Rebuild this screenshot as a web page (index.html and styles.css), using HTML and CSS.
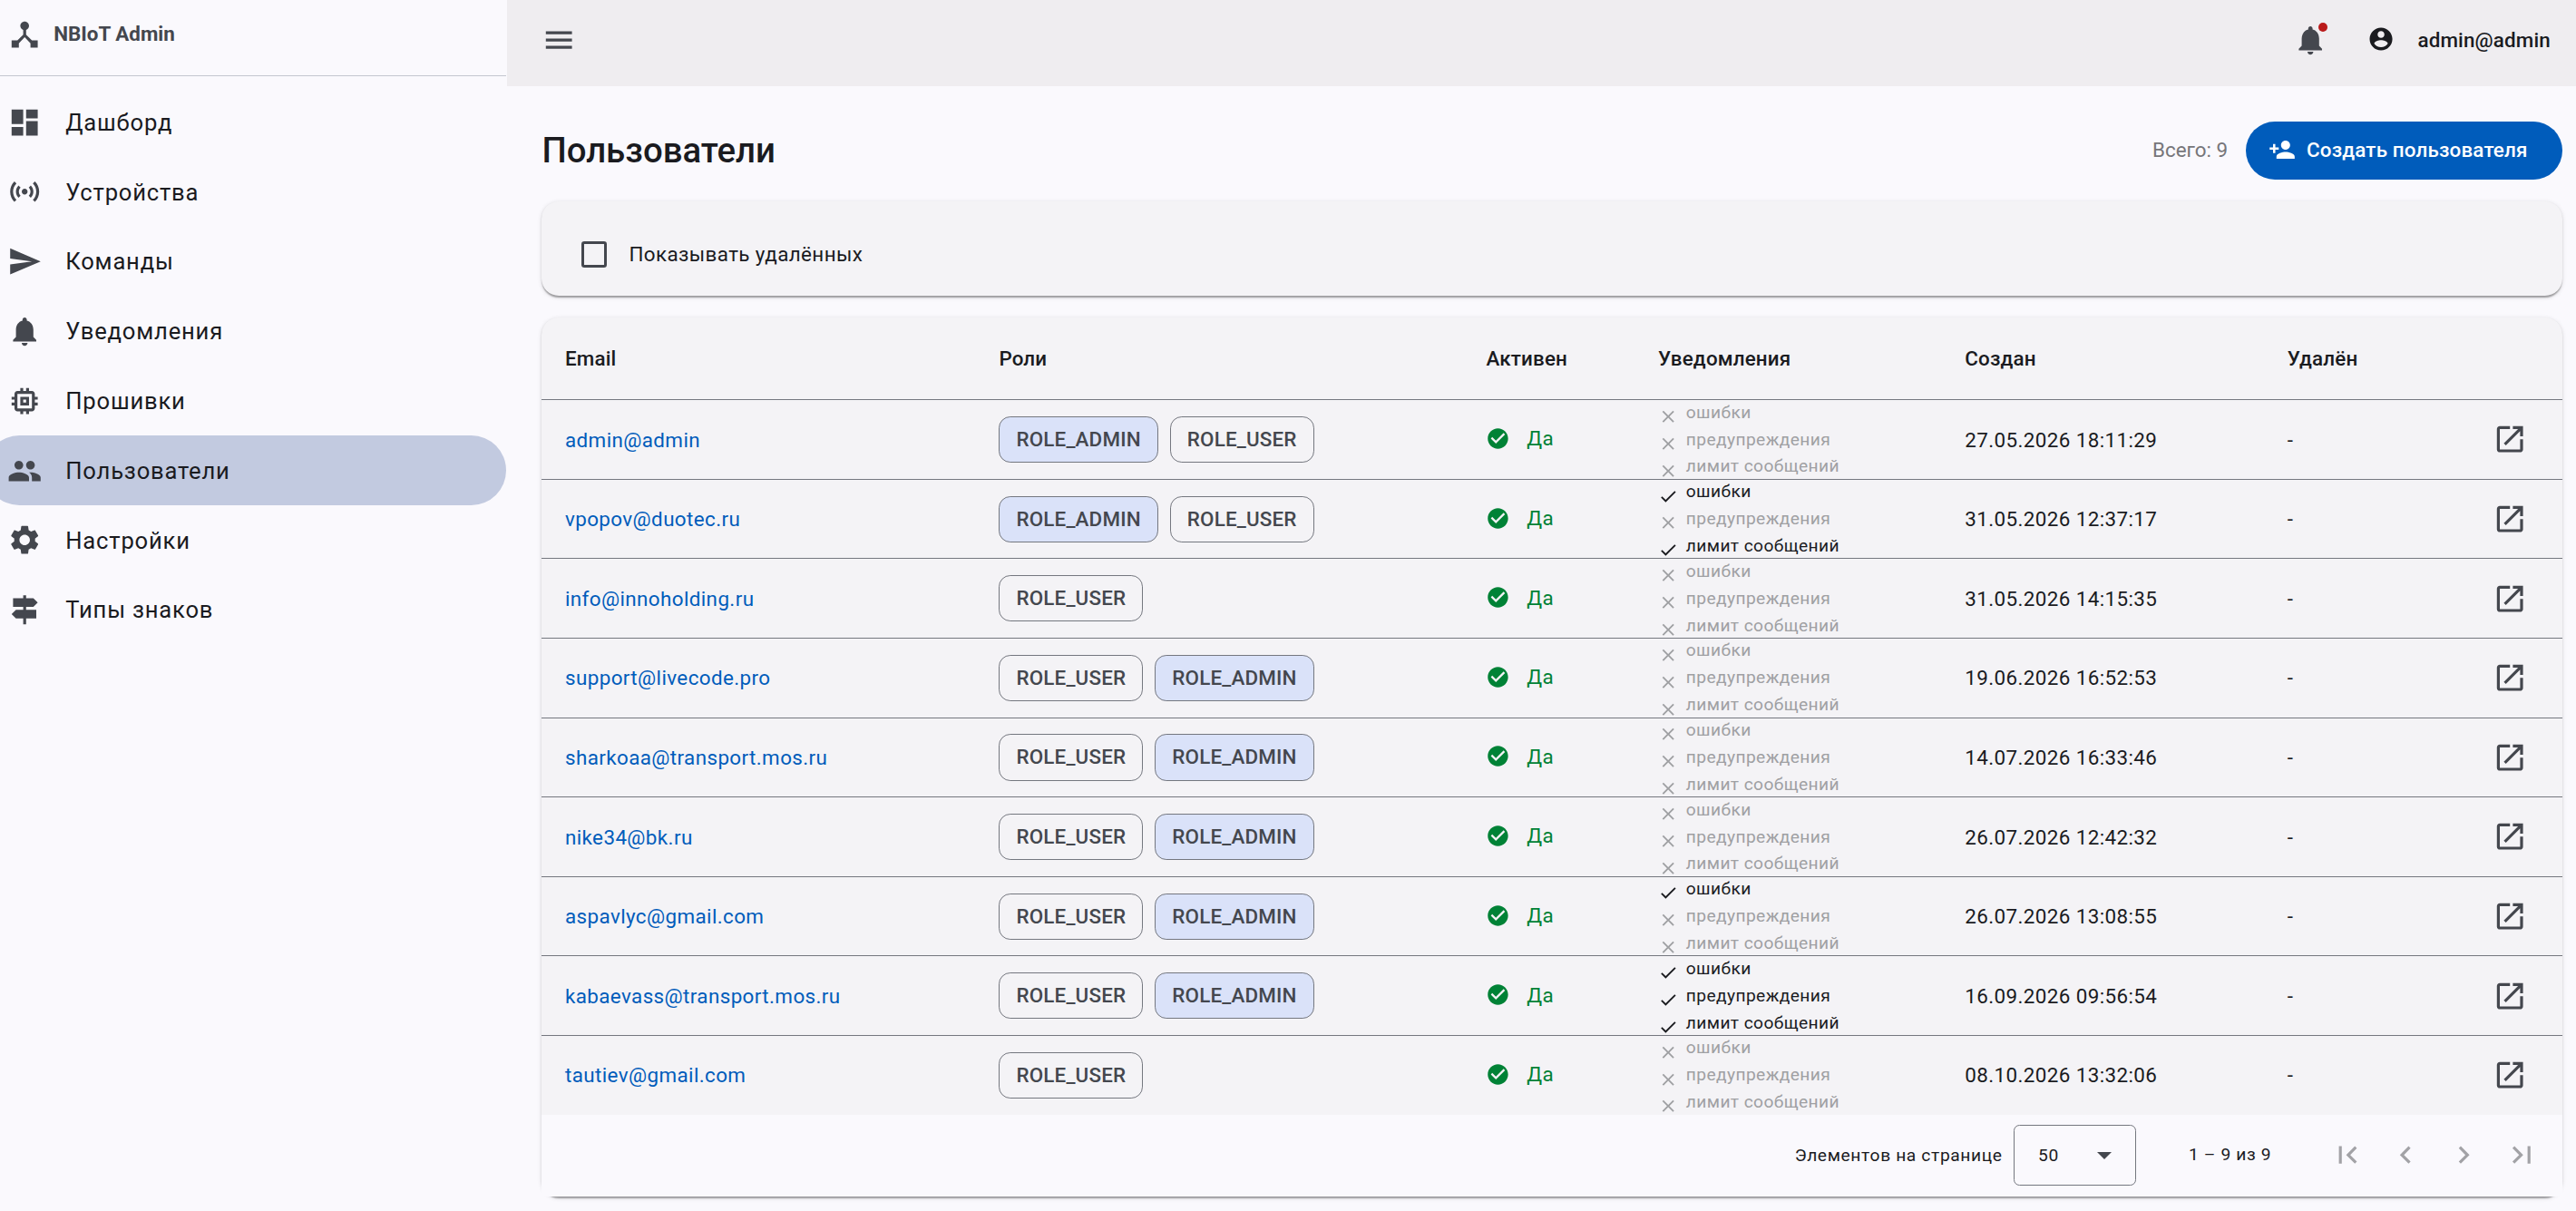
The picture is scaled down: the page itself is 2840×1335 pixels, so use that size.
FILE: index.html
```html
<!DOCTYPE html>
<html lang="ru">
<head>
<meta charset="utf-8">
<title>NBIoT Admin</title>
<link rel="stylesheet" href="styles.css">
</head>
<body>
<svg class="sprite" xmlns="http://www.w3.org/2000/svg">
  <symbol id="hub" viewBox="0 0 24 24"><path d="M17 16l-4-4V8.82C14.16 8.4 15 7.3 15 6c0-1.66-1.34-3-3-3S9 4.34 9 6c0 1.3.84 2.4 2 2.82V12l-4 4H3v5h5v-3.05l4-4.2 4 4.2V21h5v-5h-4z"/></symbol>
  <symbol id="dashboard" viewBox="0 0 24 24"><path d="M3 13h8V3H3v10zm0 8h8v-6H3v6zm10 0h8V11h-8v10zm0-18v6h8V3h-8z"/></symbol>
  <symbol id="sensors" viewBox="0 0 24 24"><path d="M7.76 16.24C6.67 15.16 6 13.66 6 12s.67-3.16 1.76-4.24l1.42 1.42C8.45 9.9 8 10.9 8 12c0 1.1.45 2.1 1.17 2.83l-1.41 1.41zm8.48 0C17.33 15.16 18 13.66 18 12s-.67-3.16-1.76-4.24l-1.42 1.42C15.55 9.9 16 10.9 16 12c0 1.1-.45 2.1-1.17 2.83l1.41 1.41zM12 10c-1.1 0-2 .9-2 2s.9 2 2 2 2-.9 2-2-.9-2-2-2zm8 2c0 2.21-.9 4.21-2.35 5.65l1.42 1.42C20.88 17.26 22 14.76 22 12s-1.12-5.26-2.93-7.07l-1.42 1.42C19.1 7.79 20 9.79 20 12zM6.35 6.35L4.93 4.93C3.12 6.74 2 9.24 2 12s1.12 5.26 2.93 7.07l1.42-1.42C4.9 16.21 4 14.21 4 12s.9-4.21 2.35-5.65z"/></symbol>
  <symbol id="send" viewBox="0 0 24 24"><path d="M2.01 21L23 12 2.01 3 2 10l15 2-15 2z"/></symbol>
  <symbol id="bell" viewBox="0 0 24 24"><path d="M12 22c1.1 0 2-.9 2-2h-4c0 1.1.89 2 2 2zm6-6v-5c0-3.07-1.64-5.64-4.5-6.32V4c0-.83-.67-1.5-1.5-1.5s-1.5.67-1.5 1.5v.68C7.63 5.36 6 7.92 6 11v5l-2 2v1h16v-1l-2-2z"/></symbol>
  <symbol id="memory" viewBox="0 0 24 24"><path d="M15 9H9v6h6V9zm-2 4h-2v-2h2v2zm8-2V9h-2V7c0-1.1-.9-2-2-2h-2V3h-2v2h-2V3H9v2H7c-1.1 0-2 .9-2 2v2H3v2h2v2H3v2h2v2c0 1.1.9 2 2 2h2v2h2v-2h2v2h2v-2h2c1.1 0 2-.9 2-2v-2h2v-2h-2v-2h2zm-4 6H7V7h10v10z"/></symbol>
  <symbol id="people" viewBox="0 0 24 24"><path d="M16 11c1.66 0 2.99-1.34 2.99-3S17.66 5 16 5c-1.66 0-3 1.34-3 3s1.34 3 3 3zm-8 0c1.66 0 2.99-1.34 2.99-3S9.66 5 8 5C6.34 5 5 6.34 5 8s1.34 3 3 3zm0 2c-2.33 0-7 1.17-7 3.5V19h14v-2.5c0-2.33-4.67-3.5-7-3.5zm8 0c-.29 0-.62.02-.97.05 1.16.84 1.97 1.97 1.97 3.45V19h6v-2.5c0-2.33-4.67-3.5-7-3.5z"/></symbol>
  <symbol id="settings" viewBox="0 0 24 24"><path d="M19.14 12.94c.04-.3.06-.61.06-.94 0-.32-.02-.64-.07-.94l2.03-1.58c.18-.14.23-.41.12-.61l-1.92-3.32c-.12-.22-.37-.29-.59-.22l-2.39.96c-.5-.38-1.03-.7-1.62-.94l-.36-2.54c-.04-.24-.24-.41-.48-.41h-3.84c-.24 0-.43.17-.47.41l-.36 2.54c-.59.24-1.13.57-1.62.94l-2.39-.96c-.22-.08-.47 0-.59.22L2.74 8.87c-.12.21-.08.47.12.61l2.03 1.58c-.05.3-.09.63-.09.94s.02.64.07.94l-2.03 1.58c-.18.14-.23.41-.12.61l1.92 3.32c.12.22.37.29.59.22l2.39-.96c.5.38 1.03.7 1.62.94l.36 2.54c.05.24.24.41.48.41h3.84c.24 0 .44-.17.47-.41l.36-2.54c.59-.24 1.13-.56 1.62-.94l2.39.96c.22.08.47 0 .59-.22l1.92-3.32c.12-.22.07-.47-.12-.61l-2.01-1.58zM12 15.6c-1.98 0-3.6-1.62-3.6-3.6s1.62-3.6 3.6-3.6 3.6 1.62 3.6 3.6-1.62 3.6-3.6 3.6z"/></symbol>
  <symbol id="signpost" viewBox="0 0 24 24"><path d="M13 10h5l3-3-3-3h-5V2h-2v2H4v6h7v2H6l-3 3 3 3h5v4h2v-4h7v-6h-7v-2z"/></symbol>
  <symbol id="menu" viewBox="0 0 24 24"><path d="M3 18h18v-2H3v2zm0-5h18v-2H3v2zm0-7v2h18V6H3z"/></symbol>
  <symbol id="account" viewBox="0 0 24 24"><path d="M12 2C6.48 2 2 6.48 2 12s4.48 10 10 10 10-4.48 10-10S17.52 2 12 2zm0 3c1.66 0 3 1.34 3 3s-1.34 3-3 3-3-1.34-3-3 1.34-3 3-3zm0 14.2c-2.5 0-4.71-1.28-6-3.22.03-1.99 4-3.08 6-3.08 1.99 0 5.97 1.09 6 3.08-1.29 1.94-3.5 3.22-6 3.22z"/></symbol>
  <symbol id="person-add" viewBox="0 0 24 24"><path d="M15 12c2.21 0 4-1.79 4-4s-1.79-4-4-4-4 1.79-4 4 1.79 4 4 4zm-9-2V7H4v3H1v2h3v3h2v-3h3v-2H6zm9 4c-2.67 0-8 1.34-8 4v2h16v-2c0-2.66-5.33-4-8-4z"/></symbol>
  <symbol id="check-circle" viewBox="0 0 24 24"><path d="M12 2C6.48 2 2 6.48 2 12s4.48 10 10 10 10-4.48 10-10S17.52 2 12 2zm-2 15l-5-5 1.41-1.41L10 14.17l7.59-7.59L19 8l-9 9z"/></symbol>
  <symbol id="check" viewBox="0 0 24 24"><path d="M9 16.17L4.83 12l-1.42 1.41L9 19 21 7l-1.41-1.41z"/></symbol>
  <symbol id="close" viewBox="0 0 24 24"><path d="M19 6.41L17.59 5 12 10.59 6.41 5 5 6.41 10.59 12 5 17.59 6.41 19 12 13.41 17.59 19 19 17.59 13.41 12z"/></symbol>
  <symbol id="open" viewBox="0 0 24 24"><path d="M19 19H5V5h7V3H5c-1.11 0-2 .9-2 2v14c0 1.1.89 2 2 2h14c1.1 0 2-.9 2-2v-7h-2v7zM14 3v2h3.59l-9.83 9.83 1.41 1.41L19 6.41V10h2V3h-7z"/></symbol>
  <symbol id="first" viewBox="0 0 24 24"><path d="M18.41 16.59L13.82 12l4.59-4.59L17 6l-6 6 6 6zM6 6h2v12H6z"/></symbol>
  <symbol id="prev" viewBox="0 0 24 24"><path d="M15.41 7.41L14 6l-6 6 6 6 1.41-1.41L10.83 12z"/></symbol>
  <symbol id="next" viewBox="0 0 24 24"><path d="M10 6L8.59 7.41 13.17 12l-4.58 4.59L10 18l6-6z"/></symbol>
  <symbol id="last" viewBox="0 0 24 24"><path d="M5.59 7.41L10.18 12l-4.59 4.59L7 18l6-6-6-6zM16 6h2v12h-2z"/></symbol>
</svg>
<div class="app">
  <aside class="sidebar">
    <div class="brand"><svg class="icon"><use href="#hub"/></svg><span>NBIoT Admin</span></div>
    <nav class="nav">
      <a class="nav-item"><svg class="icon"><use href="#dashboard"/></svg><span>Дашборд</span></a>
      <a class="nav-item"><svg class="icon"><use href="#sensors"/></svg><span>Устройства</span></a>
      <a class="nav-item"><svg class="icon"><use href="#send"/></svg><span>Команды</span></a>
      <a class="nav-item"><svg class="icon"><use href="#bell"/></svg><span>Уведомления</span></a>
      <a class="nav-item"><svg class="icon"><use href="#memory"/></svg><span>Прошивки</span></a>
      <a class="nav-item active"><svg class="icon"><use href="#people"/></svg><span>Пользователи</span></a>
      <a class="nav-item"><svg class="icon"><use href="#settings"/></svg><span>Настройки</span></a>
      <a class="nav-item"><svg class="icon"><use href="#signpost"/></svg><span>Типы знаков</span></a>
    </nav>
  </aside>
  <div class="page">
    <header class="toolbar">
      <svg class="icon"><use href="#menu"/></svg>
      <span class="spacer"></span>
      <span class="alerts"><svg class="icon"><use href="#bell"/></svg><i class="dot"></i></span>
      <span class="user"><svg class="icon icon-small"><use href="#account"/></svg><span>admin@admin</span></span>
    </header>
    <main class="content">
      <div class="heading">
        <h1>Пользователи</h1>
        <span class="spacer"></span>
        <span class="total">Всего: 9</span>
        <button class="create"><svg class="icon icon-small"><use href="#person-add"/></svg><span>Создать пользователя</span></button>
      </div>
      <section class="card filter">
        <label class="check-label"><span class="checkbox"></span><span>Показывать удалённых</span></label>
      </section>
      <section class="card">
        <table class="users">
          <colgroup><col class="c-email"><col class="c-roles"><col class="c-active"><col class="c-notes"><col class="c-created"><col></colgroup>
          <thead><tr><th>Email</th><th>Роли</th><th>Активен</th><th>Уведомления</th><th>Создан</th><th>Удалён</th></tr></thead>
          <tbody id="rows"></tbody>
        </table>
        <footer class="paginator">
          <span class="per-page">Элементов на странице</span>
          <span class="select"><span>50</span><i class="arrow"></i></span>
          <span class="range">1 – 9 из 9</span>
          <span class="pages">
            <svg class="icon"><use href="#first"/></svg><svg class="icon"><use href="#prev"/></svg><svg class="icon"><use href="#next"/></svg><svg class="icon"><use href="#last"/></svg>
          </span>
        </footer>
      </section>
    </main>
  </div>
</div>
<script src="app.js"></script>
</body>
</html>
```
FILE: styles.css
```css
* { box-sizing: border-box; }
html { background: #faf9fd; }
body {
  margin: 0;
  zoom: 1.6;
  font-family: Roboto, "Liberation Sans", sans-serif;
  font-size: 14px;
  line-height: 20px;
  letter-spacing: .25px;
  color: #1a1b1f;
  background: #faf9fd;
  overflow: hidden;
}
.sprite { display: none; }
.icon { width: 24px; height: 24px; fill: currentColor; flex: none; display: block; }
.icon-small { width: 18.8px; height: 18.8px; }
.spacer { flex: 1; }
.app { display: flex; height: 834.375px; overflow: hidden; }

.sidebar { width: 349.375px; padding-right: .625px; flex: none; overflow: hidden; }
.brand {
  display: flex; align-items: flex-start; gap: 7.8px;
  height: 52.5px; padding: 12px 0 0 5.2px;
  border-bottom: 1px solid #c4c6d0;
  color: #44474e; font-weight: 700; letter-spacing: 0;
}
.brand span { margin-top: 1.2px; }
.nav { padding-top: 7.5px; margin-left: -10.8px; }
.nav-item {
  display: flex; align-items: center; gap: 16px;
  height: 48px; padding: .5px 16px 0; border-radius: 24px;
  font-size: 16px; letter-spacing: .5px;
}
.nav-item .icon { color: #44474e; }
.nav-item.active { background: #c2cae0; }

.page { flex: 1; min-width: 0; }
.toolbar {
  display: flex; align-items: center;
  height: 59.4px; padding: 0 17.5px 4.6px 24px;
  background: #efedf0;
}
.toolbar > .icon, .alerts { color: #44474e; }
.alerts { position: relative; margin-right: 27.6px; }
.dot {
  position: absolute; right: 0; top: 0;
  width: 6.25px; height: 6.25px; border-radius: 50%; background: #ba1a1a;
}
.user { display: flex; align-items: center; gap: 15.8px; font-weight: 500; letter-spacing: .1px; }
.user .icon { margin-top: -1px; }

.content { padding: 24.4px 9.4px 0 24px; }
.heading { display: flex; align-items: center; height: 40px; margin-bottom: 15px; }
h1 { margin: -1px 0 0; font-size: 24px; line-height: 32px; font-weight: 500; letter-spacing: 0; }
.total { color: #76767a; margin: -1px 12.4px 0 0; letter-spacing: 0; }
.create {
  display: flex; align-items: center; gap: 7.6px;
  height: 40px; padding: 0 24px 1px 15.6px;
  border: 0; border-radius: 20px;
  background: #005cbb; color: #fff;
  font: inherit; font-weight: 500; letter-spacing: .1px;
}
.card {
  border-radius: 12px; background: #f4f3f6;
  box-shadow: 0 2px 1px -1px rgba(0,0,0,.2), 0 1px 1px rgba(0,0,0,.14), 0 1px 3px rgba(0,0,0,.12);
}
.filter { height: 65px; margin-bottom: 15.2px; padding: 20.3px 16px 16px; display: flex; align-items: center; }
.check-label { display: flex; align-items: center; gap: 15px; margin-top: 3px; padding-left: 11px; }
.checkbox { width: 18px; height: 18px; border: 2px solid #44474e; border-radius: 2px; margin-top: 1px; }

.users { width: 100%; table-layout: fixed; border-collapse: separate; border-spacing: 0; }
.users th, .users td { padding: 0 16px; text-align: left; vertical-align: middle; border-bottom: 1px solid #74777f; }
.users th { height: 56.8px; font-weight: 500; letter-spacing: .1px; }
.users td { height: 54.75px; }
.users tbody tr:last-child td { border-bottom: 0; height: 54.125px; }
.c-email { width: 299px; }
.c-roles { width: 335.7px; }
.c-active { width: 118.4px; }
.c-notes { width: 211.45px; }
.c-created { width: 222.2px; }
.email { color: #005cbb; }
.chips { display: flex; gap: 8px; }
.chip {
  height: 32px; line-height: 30px; padding: 0 11.35px;
  border: 1px solid #74777f; border-radius: 8px;
  color: #44474e; font-weight: 500; letter-spacing: .1px;
}
.chip.admin { background: #dae2f9; }
.status { display: flex; align-items: center; gap: 11.2px; color: #008236; margin-top: -1.4px; }
.status .icon { width: 16.8px; height: 16.8px; }
.notes { height: 54px; display: flex; flex-direction: column; justify-content: center; }
.note { display: flex; align-items: center; gap: 5.3px; height: 18.7px; flex: none; font-size: 12px; letter-spacing: .25px; }
.note .icon { width: 14px; height: 14px; margin-top: 5.6px; }
.note.off { color: #9fa0a3; }
.last-cell { display: flex; align-items: center; justify-content: space-between; }
.last-cell .icon { color: #44474e; margin-right: 8px; }

.paginator {
  display: flex; align-items: center; justify-content: flex-end;
  height: 56.2px; padding-right: 8px;
  background: #faf9fd; font-size: 12px; letter-spacing: .4px;
}
.select {
  display: flex; align-items: center; justify-content: space-between;
  width: 84px; height: 42.4px; margin: 0 36.4px 0 8px; padding: 0 16px;
  border: 1px solid #74777f; border-radius: 4px;
}
.arrow { border: 5px solid transparent; border-top-color: #44474e; border-bottom: 0; margin-top: 1px; }
.range { margin-top: -1px; }
.pages { display: flex; gap: 16px; margin-left: 40.3px; padding-right: 8.2px; color: #a2a2a6; }
```
FILE: app.js
```js
const A = "ROLE_ADMIN", U = "ROLE_USER";
const labels = ["ошибки", "предупреждения", "лимит сообщений"];
const users = [
  ["admin@admin", [A, U], [0, 0, 0], "27.05.2026 18:11:29"],
  ["vpopov@duotec.ru", [A, U], [1, 0, 1], "31.05.2026 12:37:17"],
  ["info@innoholding.ru", [U], [0, 0, 0], "31.05.2026 14:15:35"],
  ["support@livecode.pro", [U, A], [0, 0, 0], "19.06.2026 16:52:53"],
  ["sharkoaa@transport.mos.ru", [U, A], [0, 0, 0], "14.07.2026 16:33:46"],
  ["nike34@bk.ru", [U, A], [0, 0, 0], "26.07.2026 12:42:32"],
  ["aspavlyc@gmail.com", [U, A], [1, 0, 0], "26.07.2026 13:08:55"],
  ["kabaevass@transport.mos.ru", [U, A], [1, 1, 1], "16.09.2026 09:56:54"],
  ["tautiev@gmail.com", [U], [0, 0, 0], "08.10.2026 13:32:06"]
];
const icon = id => `<svg class="icon"><use href="#${id}"/></svg>`;
document.getElementById("rows").innerHTML = users.map(([email, roles, notes, created]) => `
<tr>
  <td><a class="email">${email}</a></td>
  <td><div class="chips">${roles.map(r => `<span class="chip${r === A ? " admin" : ""}">${r}</span>`).join("")}</div></td>
  <td><div class="status">${icon("check-circle")}<span>Да</span></div></td>
  <td><div class="notes">${notes.map((on, i) => `<div class="note${on ? "" : " off"}">${icon(on ? "check" : "close")}<span>${labels[i]}</span></div>`).join("")}</div></td>
  <td>${created}</td>
  <td><div class="last-cell"><span>-</span>${icon("open")}</div></td>
</tr>`).join("");
```
